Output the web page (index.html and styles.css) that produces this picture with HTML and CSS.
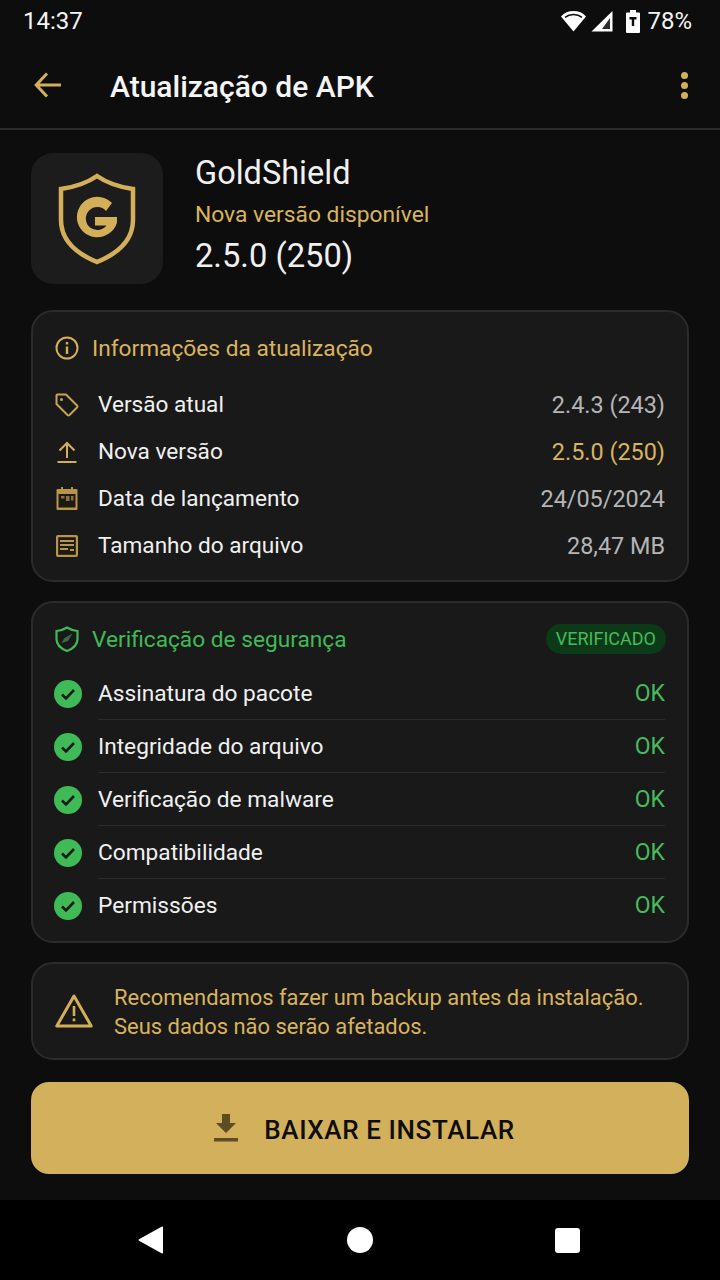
FILE: index.html
```html
<!DOCTYPE html>
<html lang="pt">
<head>
   <meta charset="UTF-8">
   <meta name="viewport" content="width=device-width, initial-scale=1.0">
   <title>Atualização de APK</title>
   <link rel="stylesheet" href="styles.css">
</head>
<body>
   <!-- Status bar -->
   <div class="status-bar">
       <span class="status-time">14:37</span>
       <div class="status-icons">
           <svg class="icon-wifi" width="25" height="22" viewBox="0 0 25 22"><path d="M0 6.500C3.200 2.700 7.500 1 12.500 1S21.800 2.700 25 6.500L12.500 21.500z" fill="#fff"/><path d="M4 7.300C6.300 5.500 9.200 4.500 12.500 4.500s6.200 1 8.500 2.800" fill="none" stroke="#0d0d0d" stroke-width="1.500"/></svg>
           <svg class="icon-signal" width="22" height="22" viewBox="0 0 22 22"><path d="M21.500 1v20.500H.5z" fill="#fff"/><path d="M19 8v11h-8z" fill="#2c2c2c"/></svg>
           <svg class="icon-battery" width="14" height="23" viewBox="0 0 14 23"><path d="M4 0h6v2.500h3a1 1 0 0 1 1 1V22a1 1 0 0 1-1 1H1a1 1 0 0 1-1-1V3.500a1 1 0 0 1 1-1h3z" fill="#fff"/><path d="M3.500 7h7v2.400H8.200V16H5.800V9.400H3.500z" fill="#0d0d0d"/></svg>
           <span class="status-pct">78%</span>
       </div>
   </div>

   <!-- Toolbar -->
   <header class="toolbar">
       <svg class="toolbar-back" width="28" height="26" viewBox="0 0 28 26"><path d="M13 1.500 2.200 13 13 24.500M2.200 13H27" fill="none" stroke="#d4af5a" stroke-width="3"/></svg>
       <h1 class="toolbar-title">Atualização de APK</h1>
       <div class="toolbar-menu"><i></i><i></i><i></i></div>
   </header>

   <main class="content">
       <!-- App header -->
       <section class="app-head">
           <div class="app-icon">
               <svg width="78" height="92" viewBox="0 0 78 92">
                   <path d="M39 3C29 10 17 14 3 16V47c0 20 14 33 36 42 22-9 36-22 36-42V16C61 14 49 10 39 3z" fill="none" stroke="#d4af5a" stroke-width="4.500"/>
                   <path d="M54 30A20.500 20.500 0 0 0 19 46.500 20.500 20.500 0 0 0 59 49.500V44H37v8.500h11.500A11.500 11.500 0 1 1 48 38z" fill="#d4af5a"/>
               </svg>
           </div>
           <div class="app-info">
               <div class="app-name">GoldShield</div>
               <div class="app-sub">Nova versão disponível</div>
               <div class="app-version">2.5.0 (250)</div>
           </div>
       </section>

       <!-- Update info -->
       <section class="card card-info">
           <div class="card-title gold">
               <svg width="24" height="24" viewBox="0 0 24 24"><circle cx="12" cy="12" r="10.500" fill="none" stroke="#d4af5a" stroke-width="2"/><path d="M10.800 10.500h2.400V18h-2.400zM10.800 6h2.400v2.400h-2.400z" fill="#d4af5a"/></svg>
               <span>Informações da atualização</span>
           </div>
           <div class="info-row">
               <svg width="24" height="24" viewBox="0 0 24 24"><path d="M1.500 2.500a1 1 0 0 1 1-1H11l11 11a1.500 1.500 0 0 1 0 2L14.500 22a1.500 1.500 0 0 1-2 0L1.500 11z" fill="none" stroke="#c9a452" stroke-width="2"/><circle cx="6.500" cy="6.500" r="1.500" fill="#c9a452"/></svg>
               <span class="info-label">Versão atual</span>
               <span class="info-value">2.4.3 (243)</span>
           </div>
           <div class="info-row">
               <svg width="24" height="24" viewBox="0 0 24 24"><path d="M4.500 10.500 12 3l7.500 7.500M12 3v15M2.500 22h19" fill="none" stroke="#d4af5a" stroke-width="2"/></svg>
               <span class="info-label">Nova versão</span>
               <span class="info-value gold">2.5.0 (250)</span>
           </div>
           <div class="info-row">
               <svg width="24" height="24" viewBox="0 0 24 24"><path d="M6 0h2v2h8V0h2v2h3.500a1 1 0 0 1 1 1v19a1 1 0 0 1-1 1h-19a1 1 0 0 1-1-1V3a1 1 0 0 1 1-1H6z" fill="#b9954b"/><path d="M3.500 7h17v13.500h-17z" fill="#1d1a14"/><path d="M6 9h3.500v2.500H6zM11 9h3.500v5H11zM16 9h2.500v4.500H16z" fill="#8f7238"/></svg>
               <span class="info-label">Data de lançamento</span>
               <span class="info-value">24/05/2024</span>
           </div>
           <div class="info-row">
               <svg width="24" height="24" viewBox="0 0 24 24"><rect x="1" y="1" width="22" height="22" rx="2" fill="#b9954b"/><rect x="3.200" y="3.200" width="17.600" height="17.600" fill="#1d1a14"/><path d="M5 6h14v2H5zM5 10h14v2H5zM5 14h8v2H5zM15 15h4v2h-4z" fill="#b9954b"/></svg>
               <span class="info-label">Tamanho do arquivo</span>
               <span class="info-value">28,47 MB</span>
           </div>
       </section>

       <!-- Security check -->
       <section class="card card-security">
           <div class="card-title green">
               <svg width="24" height="26" viewBox="0 0 24 26"><path d="M12 1.500C9 3.500 5.500 4.500 1.500 5v8c0 5.500 4 9.500 10.500 12 6.500-2.500 10.500-6.500 10.500-12V5C18.500 4.500 15 3.500 12 1.500z" fill="none" stroke="#3fba57" stroke-width="2.200"/><path d="M6.500 17l3-5 8-4.500-4.500 7.500z" fill="#3a6b45"/></svg>
               <span>Verificação de segurança</span>
               <span class="badge">VERIFICADO</span>
           </div>
           <div class="check-row">
               <svg class="check-icon" width="28" height="28" viewBox="0 0 28 28"><circle cx="14" cy="14" r="14" fill="#3fba57"/><path d="M8 14.500l4 4 8-8.500" fill="none" stroke="#1a1a1a" stroke-width="2.600"/></svg>
               <div class="check-body"><span>Assinatura do pacote</span><span class="check-ok">OK</span></div>
           </div>
           <div class="check-row">
               <svg class="check-icon" width="28" height="28" viewBox="0 0 28 28"><circle cx="14" cy="14" r="14" fill="#3fba57"/><path d="M8 14.500l4 4 8-8.500" fill="none" stroke="#1a1a1a" stroke-width="2.600"/></svg>
               <div class="check-body"><span>Integridade do arquivo</span><span class="check-ok">OK</span></div>
           </div>
           <div class="check-row">
               <svg class="check-icon" width="28" height="28" viewBox="0 0 28 28"><circle cx="14" cy="14" r="14" fill="#3fba57"/><path d="M8 14.500l4 4 8-8.500" fill="none" stroke="#1a1a1a" stroke-width="2.600"/></svg>
               <div class="check-body"><span>Verificação de malware</span><span class="check-ok">OK</span></div>
           </div>
           <div class="check-row">
               <svg class="check-icon" width="28" height="28" viewBox="0 0 28 28"><circle cx="14" cy="14" r="14" fill="#3fba57"/><path d="M8 14.500l4 4 8-8.500" fill="none" stroke="#1a1a1a" stroke-width="2.600"/></svg>
               <div class="check-body"><span>Compatibilidade</span><span class="check-ok">OK</span></div>
           </div>
           <div class="check-row">
               <svg class="check-icon" width="28" height="28" viewBox="0 0 28 28"><circle cx="14" cy="14" r="14" fill="#3fba57"/><path d="M8 14.500l4 4 8-8.500" fill="none" stroke="#1a1a1a" stroke-width="2.600"/></svg>
               <div class="check-body"><span>Permissões</span><span class="check-ok">OK</span></div>
           </div>
       </section>

       <!-- Warning -->
       <section class="card card-warning">
           <svg width="38" height="34" viewBox="0 0 38 34"><path d="M19 2 1.800 32h34.400z" fill="none" stroke="#d4af5a" stroke-width="3" stroke-linejoin="round"/><path d="M17.700 12h2.600v10h-2.600zM17.700 24.500h2.600v2.800h-2.600z" fill="#d4af5a"/></svg>
           <p>Recomendamos fazer um backup antes da instalação.<br>Seus dados não serão afetados.</p>
       </section>

       <button class="install">
           <svg width="26" height="28" viewBox="0 0 26 28"><path d="M9 0h8v9h6L13 19 3 9h6zM1 24h24v3.500H1z" fill="#5e4c22"/></svg>
           <span>BAIXAR E INSTALAR</span>
       </button>
   </main>

   <!-- Navigation bar -->
   <nav class="nav-bar">
       <svg width="26" height="28" viewBox="0 0 26 28"><path d="M24 1.500v25L1.500 14z" fill="#fff" stroke="#fff" stroke-width="2" stroke-linejoin="round"/></svg>
       <span class="nav-home"></span>
       <span class="nav-recent"></span>
   </nav>
</body>
</html>
```

FILE: styles.css
```css
/* page */
body {
    margin: 0;
    width: 720px;
    height: 1280px;
    overflow: hidden;
    display: flex;
    flex-direction: column;
    background-color: #0d0d0d;
    color: #f0f0f0;
    font-family: Roboto, 'Noto Sans', sans-serif;
}

.gold {
    color: #d9b45c;
}

.green {
    color: #3fba57;
}

/* status bar */
.status-bar {
    height: 42px;
    display: flex;
    align-items: center;
    justify-content: space-between;
    padding: 0 28px 0 23px;
    font-size: 24px;
    color: #f5f5f5;
}

.status-icons {
    display: flex;
    align-items: center;
    gap: 6px;
}

.icon-wifi {
    margin-right: -1px;
}

.icon-battery {
    margin: 0 1px 0 7px;
}

/* toolbar */
.toolbar {
    height: 86px;
    display: flex;
    align-items: center;
    padding: 0 32px 0 34px;
    border-bottom: 2px solid #2a2a2a;
}

.toolbar-title {
    flex: 1;
    margin: 0 0 0 48px;
    padding-top: 2px;
    font-size: 30px;
    font-weight: 500;
    color: #f5f5f5;
}

.toolbar-menu {
    display: flex;
    flex-direction: column;
    gap: 3px;
}

.toolbar-menu i {
    width: 7px;
    height: 7px;
    border-radius: 50%;
    background-color: #d4af5a;
}

/* main column */
.content {
    flex: 1;
    display: flex;
    flex-direction: column;
    padding: 23px 31px 0;
}

.app-head {
    height: 131px;
    display: flex;
    gap: 32px;
}

.app-icon {
    width: 132px;
    height: 131px;
    display: flex;
    align-items: center;
    justify-content: center;
    background-color: #1c1c1c;
    border-radius: 22px;
}

.app-name {
    margin-top: 1px;
    font-size: 32.500px;
    line-height: 38px;
}

.app-sub {
    margin-top: 10px;
    font-size: 22.800px;
    line-height: 26px;
    color: #d9b45c;
}

.app-version {
    margin-top: 10px;
    font-size: 32.700px;
    line-height: 36px;
}

/* cards */
.card {
    box-sizing: border-box;
    background-color: #191919;
    border: 2px solid #2b2b2b;
    border-radius: 22px;
}

.card-info {
    height: 272px;
    margin-top: 26px;
    padding: 18px 22px 0;
}

.card-security {
    height: 342px;
    margin-top: 19px;
    padding: 18px 22px 0;
}

.card-warning {
    height: 98px;
    margin-top: 19px;
    display: flex;
    align-items: center;
    gap: 21px;
    padding: 0 22px;
}

.card-warning p {
    margin: 0;
    padding-top: 2px;
    font-size: 21.950px;
    line-height: 29px;
    color: #d9b45c;
}

.card-title {
    height: 36px;
    display: flex;
    align-items: center;
    gap: 13px;
    font-size: 22.700px;
}

.badge {
    margin: 0 -1px 0 auto;
    padding: 0 10px;
    height: 30px;
    line-height: 30px;
    border-radius: 15px;
    background-color: #0c3a18;
    font-size: 18px;
    color: #45bb5c;
}

/* update info rows */
.info-row {
    height: 47px;
    display: flex;
    align-items: center;
    font-size: 22.600px;
}

.card-title + .info-row {
    margin-top: 15px;
}

.info-label {
    flex: 1;
    margin-left: 19px;
}

.info-value {
    font-size: 23.400px;
    color: #b5b5b5;
}

.info-value.gold {
    color: #d9b45c;
}

/* security rows */
.check-row {
    height: 53px;
    display: flex;
    align-items: center;
    gap: 16px;
    font-size: 22.700px;
}

.card-title + .check-row {
    margin-top: 10px;
}

.check-icon {
    margin-left: -1px;
}

.check-body {
    flex: 1;
    height: 53px;
    display: flex;
    align-items: center;
    justify-content: space-between;
    border-bottom: 1px solid #2b2b2b;
    box-sizing: border-box;
}

.check-row:last-child .check-body {
    border-bottom: none;
}

.check-ok {
    font-size: 23px;
    color: #45bb5c;
}

/* install button */
.install {
    height: 92px;
    margin-top: 22px;
    padding: 0 0 0 8px;
    display: flex;
    align-items: center;
    justify-content: center;
    gap: 25px;
    border: none;
    border-radius: 18px;
    background-color: #d3b05b;
    color: #0d0d0d;
    font-family: inherit;
    font-size: 26px;
    font-weight: 500;
    letter-spacing: 0.600px;
}

.install span {
    padding-top: 4px;
}

/* navigation bar */
.nav-bar {
    height: 80px;
    display: flex;
    align-items: center;
    background-color: #000;
    padding-left: 138px;
}

.nav-home {
    width: 26px;
    height: 26px;
    margin-left: 183px;
    border-radius: 50%;
    background-color: #fff;
}

.nav-recent {
    width: 25px;
    height: 25px;
    margin-left: 182px;
    border-radius: 3px;
    background-color: #fff;
}
```
